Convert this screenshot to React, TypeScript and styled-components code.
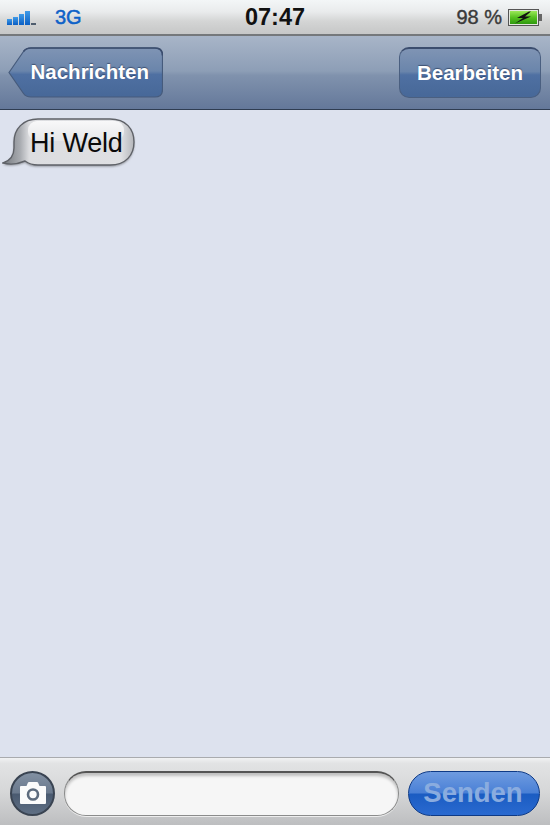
import * as React from 'react';
import styled, { createGlobalStyle } from 'styled-components';

const GlobalStyle = createGlobalStyle`
  html, body {
    margin: 0;
    padding: 0;
    background: #dde2ee;
  }
`;

const Screen = styled.div`
  width: 550px;
  height: 825px;
  display: flex;
  flex-direction: column;
  overflow: hidden;
  font-family: "Liberation Sans", Arial, sans-serif;
  background: #dde2ee;
`;

const StatusBar = styled.div`
  height: 34px;
  flex: none;
  display: grid;
  grid-template-columns: 1fr auto 1fr;
  align-items: center;
  padding: 0 7px;
  background: linear-gradient(#f3f6f7 0%, #e9ebec 35%, #d4d5d5 62%, #c6c7c7 100%);
  border-bottom: 2px solid #75787b;
`;

const StatusLeft = styled.div`
  display: flex;
  align-items: center;
  gap: 19px;
`;

const Signal = styled.div`
  display: flex;
  align-items: flex-end;
  gap: 1px;
  height: 14px;
  margin-top: 2px;
`;

const SignalBar = styled.span<{ $h: number; $off?: boolean }>`
  width: 5px;
  height: ${(p) => p.$h}px;
  background: ${(p) => (p.$off ? '#4f5d6e' : 'linear-gradient(#3f9be8, #0b5fc4)')};
`;

const Network = styled.span`
  font-size: 20px;
  color: #0f62c8;
  -webkit-text-stroke: 0.5px #0f62c8;
`;

const Clock = styled.span`
  font-size: 23.5px;
  font-weight: 700;
  color: #111;
`;

const StatusRight = styled.div`
  display: flex;
  align-items: center;
  justify-content: flex-end;
  gap: 6px;
`;

const Percent = styled.span`
  font-size: 20px;
  color: #3a3a3a;
  -webkit-text-stroke: 0.4px #3a3a3a;
`;

const NavBar = styled.div`
  height: 74px;
  flex: none;
  display: flex;
  align-items: center;
  justify-content: space-between;
  padding: 0 9px 1px 8px;
  box-sizing: border-box;
  background: linear-gradient(#a8b5c8 0%, #8d9eb6 48%, #8092ad 54%, #64789a 100%);
  border-bottom: 1px solid #2f3d52;
`;

const BackButton = styled.div`
  position: relative;
  width: 155px;
  height: 51px;
  display: flex;
  align-items: center;
  justify-content: flex-end;
  padding-right: 14px;
  box-sizing: border-box;
`;

const BackShape = styled.svg`
  position: absolute;
  inset: 0;
`;

const ButtonLabel = styled.span`
  position: relative;
  font-size: 20.5px;
  font-weight: 700;
  color: #fff;
  text-shadow: 0 -1px 1px rgba(30, 45, 75, 0.6);
`;

const EditButton = styled.div`
  width: 142px;
  height: 51px;
  display: flex;
  align-items: center;
  justify-content: center;
  box-sizing: border-box;
  border-radius: 10px;
  border: 1px solid #4a5f80;
  border-top: 2px solid #3b4d6e;
  background: linear-gradient(#7f94b4 0%, #6a85ab 47%, #4f70a2 54%, #476898 100%);
`;

const Messages = styled.div`
  flex: 1;
  padding: 7px 0 0 2px;
  background: #dde2ee;
`;

const Bubble = styled.div`
  position: relative;
  width: 134px;
  height: 52px;
  display: flex;
  align-items: center;
  padding-left: 28px;
  box-sizing: border-box;
`;

const BubbleShape = styled.svg`
  position: absolute;
  inset: 0;
`;

const BubbleText = styled.span`
  position: relative;
  font-size: 27px;
  color: #0a0a0a;
  letter-spacing: -0.2px;
`;

const Toolbar = styled.div`
  height: 68px;
  flex: none;
  display: flex;
  align-items: center;
  box-sizing: border-box;
  padding: 3px 10px 0 10px;
  gap: 9px;
  border-top: 1px solid #a9abae;
  background: linear-gradient(#f1f2f3 0%, #e2e3e4 8%, #d6d7d8 50%, #bdbec0 100%);
`;

const CameraButton = styled.div`
  width: 45px;
  height: 45px;
  flex: none;
  display: flex;
  align-items: center;
  justify-content: center;
  box-sizing: border-box;
  border-radius: 50%;
  border: 2px solid #3a4452;
  background: linear-gradient(#8290a2 0%, #6a798d 48%, #4a5a70 52%, #5f6f84 100%);
`;

const Input = styled.div`
  flex: 1;
  height: 45px;
  box-sizing: border-box;
  border-radius: 22px;
  background: #f6f6f6;
  border: 1px solid #8b8c8c;
  border-top: 2px solid #555;
  box-shadow: inset 0 3px 3px rgba(0, 0, 0, 0.22), 0 1px 0 #eee;
`;

const SendButton = styled.div`
  width: 132px;
  height: 45px;
  flex: none;
  display: flex;
  align-items: center;
  justify-content: center;
  box-sizing: border-box;
  padding-right: 2px;
  border-radius: 23px;
  border: 1px solid #0e3a86;
  background: linear-gradient(#6e9be0 0%, #4a80d6 48%, #1b5cc2 52%, #2a6ad0 100%);
`;

const SendLabel = styled.span`
  font-size: 27.5px;
  font-weight: 700;
  color: #8aacdf;
`;

function Battery() {
  return (
    <svg width="35" height="17" viewBox="0 0 35 17">
      <defs>
        <linearGradient id="charge" x1="0" y1="0" x2="0" y2="1">
          <stop offset="0" stopColor="#9be858" />
          <stop offset="0.5" stopColor="#56c020" />
          <stop offset="1" stopColor="#2f9a10" />
        </linearGradient>
      </defs>
      <rect x="0.5" y="0.5" width="30" height="16" fill="#e4e7e0" stroke="#555" />
      <rect x="2" y="2" width="27" height="13" fill="url(#charge)" />
      <rect x="31" y="5" width="3" height="7" fill="#666" />
      <path d="M21 2.5 L9 9 L15 9 L7 14.5 L23 7.6 L17 7.6 L23 2.5 Z" fill="#111" />
    </svg>
  );
}

function CameraIcon() {
  return (
    <svg width="28" height="24" viewBox="0 0 28 24">
      <path
        d="M2 5 H7.5 L9 1.5 Q9.3 1 10 1 H18 Q18.7 1 19 1.5 L20.5 5 H26 Q27 5 27 6 V22 Q27 23 26 23 H2 Q1 23 1 22 V6 Q1 5 2 5 Z"
        fill="#fbfbfb"
      />
      <circle cx="14" cy="13.5" r="5" fill="none" stroke="#5d6b7d" strokeWidth="2.6" />
    </svg>
  );
}

export default function App() {
  return (
    <Screen>
      <GlobalStyle />
      <StatusBar>
        <StatusLeft>
          <Signal>
            <SignalBar $h={6} />
            <SignalBar $h={8} />
            <SignalBar $h={11} />
            <SignalBar $h={14} />
            <SignalBar $h={2} $off />
          </Signal>
          <Network>3G</Network>
        </StatusLeft>
        <Clock>07:47</Clock>
        <StatusRight>
          <Percent>98 %</Percent>
          <Battery />
        </StatusRight>
      </StatusBar>
      <NavBar>
        <BackButton>
          <BackShape width="155" height="51" viewBox="0 0 155 51">
            <defs>
              <linearGradient id="back" x1="0" y1="0" x2="0" y2="1">
                <stop offset="0" stopColor="#7f94b4" />
                <stop offset="0.47" stopColor="#6a85ab" />
                <stop offset="0.54" stopColor="#4f70a2" />
                <stop offset="1" stopColor="#476898" />
              </linearGradient>
            </defs>
            <path
              d="M1 25.5 L15.5 4.5 Q18 1 23 1 H147 Q154.5 1 154.5 8.5 V42.5 Q154.5 50 147 50 H23 Q18 50 15.5 46.5 Z"
              fill="url(#back)"
              stroke="#465b7c"
              strokeWidth="1.2"
            />
            <path d="M15.5 4.5 Q18 1 23 1 H147 Q154.5 1 154.5 8.5" fill="none" stroke="#3b4d6e" strokeWidth="1.6" />
          </BackShape>
          <ButtonLabel>Nachrichten</ButtonLabel>
        </BackButton>
        <EditButton>
          <ButtonLabel>Bearbeiten</ButtonLabel>
        </EditButton>
      </NavBar>
      <Messages>
        <Bubble>
          <BubbleShape width="134" height="52" viewBox="0 0 134 52">
            <defs>
              <linearGradient id="bubble" x1="0" y1="0" x2="1" y2="0">
                <stop offset="0" stopColor="#74787d" />
                <stop offset="0.13" stopColor="#a8abb0" />
                <stop offset="0.2" stopColor="#dcdde0" />
                <stop offset="0.9" stopColor="#dfe0e3" />
                <stop offset="1" stopColor="#b4b6ba" />
              </linearGradient>
              <linearGradient id="gloss" x1="0" y1="0" x2="0" y2="1">
                <stop offset="0" stopColor="#f8f8f9" />
                <stop offset="1" stopColor="#e6e7e9" />
              </linearGradient>
              <filter id="soft" x="-10%" y="-20%" width="120%" height="140%">
                <feGaussianBlur stdDeviation="1" />
              </filter>
            </defs>
            <path
              d="M36 2 H108 C124 2 132 12 132 25 C132 38 124 48 108 48 H36 C30 48 27 47 23 44 C16 47 8 48 1 46 C7 44 12 39 12 31 V25 C12 12 21 2 36 2 Z"
              fill="#8c8f95"
              transform="translate(0 1.5)"
              filter="url(#soft)"
            />
            <path
              d="M36 2 H108 C124 2 132 12 132 25 C132 38 124 48 108 48 H36 C30 48 27 47 23 44 C16 47 8 48 1 46 C7 44 12 39 12 31 V25 C12 12 21 2 36 2 Z"
              fill="url(#bubble)"
              stroke="#5f6268"
              strokeWidth="1.4"
            />
            <rect x="26" y="4" width="96" height="20" rx="9" fill="url(#gloss)" />
          </BubbleShape>
          <BubbleText>Hi Weld</BubbleText>
        </Bubble>
      </Messages>
      <Toolbar>
        <CameraButton>
          <CameraIcon />
        </CameraButton>
        <Input />
        <SendButton>
          <SendLabel>Senden</SendLabel>
        </SendButton>
      </Toolbar>
    </Screen>
  );
}
